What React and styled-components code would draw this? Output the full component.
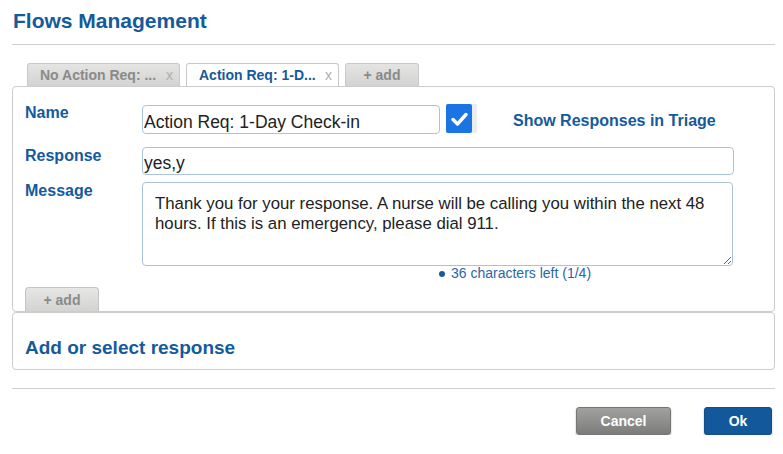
import styled, { createGlobalStyle } from "styled-components"

const blue = "#155a9c"

const GlobalStyle = createGlobalStyle`
    body {
        margin: 0;
        background: #fff;
        font-family: "Liberation Sans", Arial, sans-serif;
    }
`;

const Page = styled.div`
    width: 783px;
    box-sizing: border-box;
    padding: 0 8px 0 12px;
`;

const Header = styled.div`
    border-bottom: 1px solid #cfcfcf;
    padding: 9px 0 11px 1px;
`;

const Title = styled.h1`
    margin: 0;
    font-size: 21px;
    line-height: 24px;
    font-weight: bold;
    color: ${blue};
`;

const Tabs = styled.div`
    display: flex;
    gap: 6px;
    margin-top: 18px;
    padding-left: 15px;
`;

const Tab = styled.div`
    display: flex;
    align-items: center;
    box-sizing: border-box;
    width: ${(p) => p.$width || 153}px;
    height: 23px;
    padding: 0 6px 0 12px;
    border: 1px solid #c9c9c9;
    border-bottom: none;
    border-radius: 3px 3px 0 0;
    background: ${(p) => (p.$active ? "#fff" : "linear-gradient(#e4e4e2, #d3d3d1)")};
    color: ${(p) => (p.$active ? blue : "#8a8a8a")};
    font-size: 14px;
    font-weight: bold;
    justify-content: ${(p) => (p.$center ? "center" : "flex-start")};
    ${(p) => p.$center && "padding: 0;"}
`;

const Close = styled.span`
    margin-left: auto;
    font-weight: normal;
    color: #b0b0b0;
    font-size: 14px;
`;

const Panel = styled.div`
    border: 1px solid #cccccc;
    border-radius: 4px;
    padding: 17px 40px 0 12px;
`;

const FieldRow = styled.div`
    display: grid;
    grid-template-columns: 117px 1fr;
    align-items: start;
    margin-top: ${(p) => p.$gap || 0}px;
`;

const Label = styled.label`
    padding-top: 1px;
    font-size: 16px;
    line-height: 16px;
    font-weight: bold;
    color: ${blue};
`;

const NameGroup = styled.div`
    display: flex;
    align-items: flex-start;
`;

const TextInput = styled.input`
    box-sizing: border-box;
    width: ${(p) => p.$width}px;
    height: ${(p) => p.$height}px;
    margin-top: ${(p) => p.$offset || 0}px;
    padding: ${(p) => p.$pad}px 1px 0 1px;
    border: 1px solid #a9c3de;
    border-radius: 4px;
    font-family: "Liberation Sans", Arial, sans-serif;
    font-size: 17.5px;
    color: #222;
    outline: none;
`;

const CheckWrap = styled.div`
    display: flex;
    width: 31px;
    height: 29px;
    margin-left: 6px;
    background: #ececec;
`;

const CheckBox = styled.div`
    display: flex;
    align-items: center;
    justify-content: center;
    width: 26px;
    height: 29px;
    border-radius: 2px;
    background: #1b74e4;
`;

const ToggleLabel = styled.span`
    margin: 9px 0 0 36px;
    font-size: 16px;
    line-height: 16px;
    font-weight: bold;
    color: ${blue};
`;

const MessageBox = styled.textarea`
    box-sizing: border-box;
    display: block;
    width: 591px;
    height: 84px;
    padding: 11px 12px;
    border: 1px solid #a9c3de;
    border-radius: 4px;
    font-family: "Liberation Sans", Arial, sans-serif;
    font-size: 16.8px;
    line-height: 20px;
    color: #222;
    resize: both;
    outline: none;
`;

const Counter = styled.div`
    display: flex;
    align-items: center;
    padding-left: 414px;
    font-size: 14px;
    line-height: 15px;
    color: #2a66aa;
`;

const Dot = styled.span`
    width: 6px;
    height: 6px;
    margin-right: 6px;
    border-radius: 50%;
    background: ${blue};
`;

const AddButton = styled.div`
    display: flex;
    align-items: center;
    justify-content: center;
    box-sizing: border-box;
    width: 74px;
    height: 24px;
    margin-top: 6px;
    border: 1px solid #c4c4c2;
    border-bottom: none;
    border-radius: 4px 4px 0 0;
    background: linear-gradient(#e6e6e4, #d3d3d1);
    color: #8a8a8a;
    font-size: 14px;
    font-weight: bold;
`;

const ResponsePanel = styled.div`
    border: 1px solid #cccccc;
    border-radius: 4px;
    padding: 24px 12px 10px;
`;

const ResponseTitle = styled.h2`
    margin: 0;
    font-size: 19px;
    line-height: 22px;
    font-weight: bold;
    color: ${blue};
`;

const Footer = styled.div`
    display: flex;
    justify-content: flex-end;
    gap: 33px;
    margin-top: 18px;
    padding: 18px 3px 0 0;
    border-top: 1px solid #cfcfcf;
`;

const Button = styled.button`
    box-sizing: border-box;
    width: ${(p) => p.$width}px;
    height: 28px;
    border: 1px solid ${(p) => (p.$primary ? "#0f4f8c" : "#767674")};
    border-radius: 3px;
    background: ${(p) => (p.$primary ? "#12589b" : "linear-gradient(#a1a19f, #7c7c7a)")};
    box-shadow: 0 1px 2px rgba(0, 0, 0, 0.3);
    color: #fff;
    font-family: "Liberation Sans", Arial, sans-serif;
    font-size: 14px;
    font-weight: bold;
`;

function App() {
    return (
        <Page>
            <GlobalStyle />
            <Header>
                <Title>Flows Management</Title>
            </Header>

            <Tabs>
                <Tab>No Action Req: ...<Close>x</Close></Tab>
                <Tab $active>Action Req: 1-D...<Close>x</Close></Tab>
                <Tab $width={74} $center>+ add</Tab>
            </Tabs>

            <Panel>
                <FieldRow>
                    <Label>Name</Label>
                    <NameGroup>
                        <TextInput $width={298} $height={29} $offset={1} $pad={6} defaultValue="Action Req: 1-Day Check-in" />
                        <CheckWrap>
                            <CheckBox>
                                <svg width="17" height="14" viewBox="0 0 17 14">
                                    <path d="M2 7.5 L6.5 12 L15 2.5" fill="none" stroke="#fff" strokeWidth="3.4" strokeLinecap="round" strokeLinejoin="round" />
                                </svg>
                            </CheckBox>
                        </CheckWrap>
                        <ToggleLabel>Show Responses in Triage</ToggleLabel>
                    </NameGroup>
                </FieldRow>
                <FieldRow $gap={13}>
                    <Label>Response</Label>
                    <TextInput $width={592} $height={28} $pad={4} defaultValue="yes,y" />
                </FieldRow>
                <FieldRow $gap={7}>
                    <Label>Message</Label>
                    <MessageBox defaultValue="Thank you for your response. A nurse will be calling you within the next 48 hours. If this is an emergency, please dial 911." />
                </FieldRow>
                <Counter><Dot />36 characters left (1/4)</Counter>
                <AddButton>+ add</AddButton>
            </Panel>

            <ResponsePanel>
                <ResponseTitle>Add or select response</ResponseTitle>
            </ResponsePanel>

            <Footer>
                <Button $width={95}>Cancel</Button>
                <Button $width={68} $primary>Ok</Button>
            </Footer>
        </Page>
    )
}

export default App;
